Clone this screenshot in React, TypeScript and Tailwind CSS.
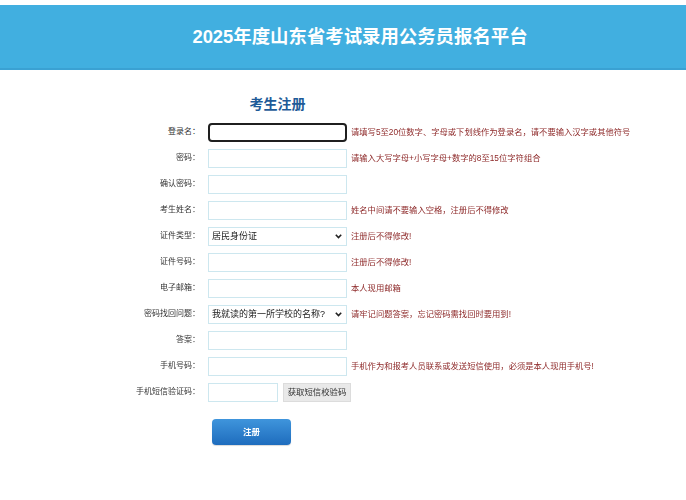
import React from 'react';

const font = { fontFamily: '"Liberation Sans", "Noto Sans CJK SC", sans-serif' };

interface FieldRow {
  label: string;
  kind: 'input' | 'select' | 'sms';
  hint?: string;
  options?: string[];
  focused?: boolean;
}

const rows: FieldRow[] = [
  { label: '登录名：', kind: 'input', focused: true, hint: '请填写5至20位数字、字母或下划线作为登录名，请不要输入汉字或其他符号' },
  { label: '密码：', kind: 'input', hint: '请输入大写字母+小写字母+数字的8至15位字符组合' },
  { label: '确认密码：', kind: 'input' },
  { label: '考生姓名：', kind: 'input', hint: '姓名中间请不要输入空格，注册后不得修改' },
  { label: '证件类型：', kind: 'select', options: ['居民身份证'], hint: '注册后不得修改!' },
  { label: '证件号码：', kind: 'input', hint: '注册后不得修改!' },
  { label: '电子邮箱：', kind: 'input', hint: '本人现用邮箱' },
  { label: '密码找回问题：', kind: 'select', options: ['我就读的第一所学校的名称?'], hint: '请牢记问题答案，忘记密码需找回时要用到!' },
  { label: '答案：', kind: 'input' },
  { label: '手机号码：', kind: 'input', hint: '手机作为和报考人员联系或发送短信使用，必须是本人现用手机号!' },
  { label: '手机短信验证码：', kind: 'sms' },
];

const Chevron = () => (
  <svg className="pointer-events-none absolute right-[5px] top-[7px]" width="7" height="5" viewBox="0 0 7 5">
    <path d="M0.8 0.8 L3.5 3.6 L6.2 0.8" fill="none" stroke="#222" strokeWidth="1.6" />
  </svg>
);

const App: React.FC = () => {
  const renderControl = (row: FieldRow) => {
    if (row.kind === 'select') {
      return (
        <div className="relative h-[19px] w-[139px]">
          <select
            className="block h-[19px] w-[139px] appearance-none border border-[#cde7ef] bg-white py-0 pl-[3px] text-[9px] leading-[17px] text-[#222] outline-none"
            style={font}
            defaultValue={row.options?.[0]}
          >
            {row.options?.map(o => (
              <option key={o}>{o}</option>
            ))}
          </select>
          <Chevron />
        </div>
      );
    }
    if (row.kind === 'sms') {
      return (
        <div className="flex items-center">
          <input className="block h-[19px] w-[70px] border border-[#cde7ef] bg-white outline-none" />
          <button
            className="ml-[5px] block h-[19px] w-[68px] border border-[#dcdcdc] bg-[#e9e9e9] text-[8.4px] leading-[17px] text-[#333]"
            style={font}
          >
            获取短信校验码
          </button>
        </div>
      );
    }
    if (row.focused) {
      return (
        <input
          autoFocus
          className="block h-[19px] w-[139px] rounded-[4px] border-2 border-[#1f1f1f] bg-white px-[2px] text-[9px] caret-black outline-none"
        />
      );
    }
    return <input className="block h-[19px] w-[139px] border border-[#cde7ef] bg-white outline-none" />;
  };

  return (
    <div className="min-h-[500px] w-[686px] bg-white" style={font}>
      <div className="pt-[5px]">
        <div className="flex h-[65px] items-center justify-center border-b-2 border-[#3aa1d3] bg-[#41afe0] pl-[34px]">
          <h1 className="text-[18.4px] font-bold text-white">2025年度山东省考试录用公务员报名平台</h1>
        </div>
      </div>

      <div className="flex pl-[208px] pt-[24px]">
        <div className="w-[139px] text-center text-[14px] font-bold leading-[20px] text-[#1e5b98]">考生注册</div>
      </div>

      <div className="mt-[5px] flex flex-col">
        {rows.map(row => (
          <div key={row.label} className="flex h-[26px] items-center">
            <div className="w-[201px] pr-[1px] text-right text-[8px] leading-[12px] text-[#333]">{row.label}</div>
            <div className="ml-[7px]">{renderControl(row)}</div>
            {row.hint && <div className="ml-[4px] text-[8.3px] leading-[12px] text-[#8e2a2a]">{row.hint}</div>}
          </div>
        ))}
      </div>

      <div className="mt-[14px] pl-[212px]">
        <button className="block h-[26px] w-[79px] rounded-[4px] bg-gradient-to-b from-[#3f95dc] to-[#1e6cbd] text-[8.5px] font-bold text-white shadow-[0_1px_1px_rgba(0,0,0,0.15)]">
          注册
        </button>
      </div>
    </div>
  );
};

export default App;
